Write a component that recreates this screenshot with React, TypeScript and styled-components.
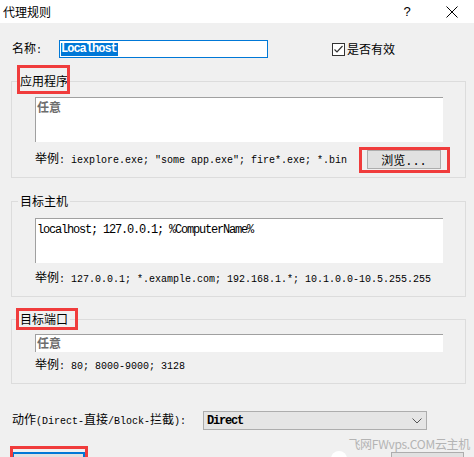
import styled, { createGlobalStyle, css } from "styled-components";

const cjk = `"Noto Sans CJK SC", "Liberation Sans", sans-serif`;
const mono = `"Liberation Mono", "Noto Sans CJK SC", monospace`;

const GlobalStyle = createGlobalStyle`
  html, body {
    margin: 0;
    padding: 0;
    background: #f0f0f0;
  }
  body {
    font-family: ${cjk};
    font-size: 12px;
    line-height: 14px;
    color: #000;
  }
`;

type Mark = { t: number; r: number; b: number; l: number };

const marked = css<{ $mark?: Mark }>`
  position: relative;
  ${({ $mark }) =>
    $mark &&
    css`
      &::after {
        content: "";
        position: absolute;
        top: ${-$mark.t}px;
        right: ${-$mark.r}px;
        bottom: ${-$mark.b}px;
        left: ${-$mark.l}px;
        border: 3px solid #f03c3c;
        pointer-events: none;
      }
    `}
`;

const Window = styled.div`
  position: relative;
  width: 474px;
  height: 457px;
  overflow: hidden;
  background: #f0f0f0;
`;

const TitleBar = styled.div`
  display: flex;
  align-items: center;
  height: 23px;
  padding-left: 3px;
  background: #fff;
`;

const Title = styled.span`
  flex: 1;
`;

const TitleButton = styled.span<{ $w: number }>`
  display: flex;
  align-items: center;
  justify-content: center;
  width: ${p => p.$w}px;
  height: 23px;
  font-family: "Liberation Sans", sans-serif;
  font-size: 13px;
`;

const Body = styled.div`
  padding: 17px 8px 0 11px;
`;

const Row = styled.div<{ $mt?: number }>`
  display: flex;
  align-items: center;
  margin-top: ${p => p.$mt ?? 0}px;
`;

const Label = styled.span<{ $w: number }>`
  width: ${p => p.$w}px;
  padding-left: 1px;
  box-sizing: border-box;
  white-space: nowrap;
`;

const Mono = styled.span`
  font-family: ${mono};
  font-size: 10px;
`;

const NameBox = styled.div`
  display: flex;
  align-items: center;
  width: 209px;
  height: 18px;
  box-sizing: border-box;
  padding-left: 1px;
  border: 1px solid #0078d7;
  background: #fff;
`;

const Selected = styled.span`
  height: 13px;
  line-height: 13px;
  padding-right: 1px;
  background: #0078d7;
  color: #fff;
  font-family: ${mono};
  font-size: 12px;
  font-weight: bold;
  letter-spacing: -1px;
`;

const Check = styled.label`
  display: flex;
  align-items: center;
  gap: 2px;
  margin-left: 64px;
`;

const CheckBox = styled.span`
  display: flex;
  align-items: center;
  justify-content: center;
  width: 13px;
  height: 13px;
  box-sizing: border-box;
  border: 1px solid #333;
  background: #fff;
`;

const Group = styled.fieldset<{ $mt: number }>`
  margin: ${p => p.$mt}px 0 0;
  padding: 0;
  min-width: 0;
  border: 1px solid #dcdcdc;
`;

const Legend = styled.legend<{ $mark?: Mark }>`
  margin-left: 6px;
  padding: 0 2px;
  line-height: 14px;
  ${marked}
`;

const GroupBody = styled.div<{ $pt: number }>`
  padding: ${p => p.$pt}px 22px 8px 23px;
`;

const Field = styled.div<{ $h: number; $pt: number }>`
  height: ${p => p.$h}px;
  box-sizing: border-box;
  padding: ${p => p.$pt}px 1px 0;
  border-top: 1px solid #a0a0a0;
  border-left: 1px solid #a0a0a0;
  background: #fff;
`;

const Placeholder = styled.span`
  color: #6d6d6d;
  font-weight: bold;
`;

const FieldMono = styled.span`
  font-family: ${mono};
  font-size: 12px;
  letter-spacing: -1.2px;
`;

const ExampleRow = styled.div<{ $mt: number }>`
  display: flex;
  align-items: center;
  justify-content: space-between;
  height: 19px;
  margin-top: ${p => p.$mt}px;
  padding-right: 2px;
  white-space: pre;
`;

const Button = styled.button<{ $mark?: Mark; $w: number; $h: number; $primary?: boolean }>`
  width: ${p => p.$w}px;
  height: ${p => p.$h}px;
  box-sizing: border-box;
  padding: 0;
  border: ${p => (p.$primary ? "2px solid #0078d7" : "1px solid #adadad")};
  background: #e1e1e1;
  font-family: ${mono};
  font-size: 12px;
  color: #000;
  ${marked}
`;

const Select = styled.div`
  display: flex;
  align-items: center;
  justify-content: space-between;
  width: 224px;
  height: 19px;
  box-sizing: border-box;
  padding: 0 4px 0 3px;
  border: 1px solid #adadad;
  background: #e5e5e5;
`;

const SelectValue = styled.span`
  font-family: ${mono};
  font-size: 12px;
  font-weight: bold;
  letter-spacing: -1.2px;
`;

const Footer = styled.div`
  display: flex;
  justify-content: space-between;
  margin-top: 22px;
  padding: 0 2px 0 1px;
`;

const Watermark = styled.div`
  position: absolute;
  right: 4px;
  top: 437px;
  color: #b4b4b4;
  font-size: 12px;
  letter-spacing: -0.3px;
`;

const WatermarkDot = styled.span`
  position: absolute;
  left: 331px;
  top: 451px;
  width: 16px;
  height: 16px;
  border-radius: 50%;
  background: #fff;
`;

const Example = ({ text }: { text: string }) => (
  <span>
    举例<Mono>{text}</Mono>
  </span>
);

const App = () => (
  <Window>
    <GlobalStyle />
    <TitleBar>
      <Title>代理规则</Title>
      <TitleButton $w={46}>?</TitleButton>
      <TitleButton $w={44}>
        <svg width="12" height="12" viewBox="0 0 12 12">
          <path d="M0.5 0.5 L11.5 11.5 M11.5 0.5 L0.5 11.5" stroke="#000" strokeWidth="1" fill="none" />
        </svg>
      </TitleButton>
    </TitleBar>

    <Body>
      <Row>
        <Label $w={48}>
          名称<Mono>:</Mono>
        </Label>
        <NameBox>
          <Selected>Localhost</Selected>
        </NameBox>
        <Check>
          <CheckBox>
            <svg width="11" height="11" viewBox="0 0 11 11">
              <polyline points="1.5,5.5 4,8 9.5,2" stroke="#333" strokeWidth="1.2" fill="none" />
            </svg>
          </CheckBox>
          是否有效
        </Check>
      </Row>

      <Group $mt={16}>
        <Legend $mark={{ t: 9, r: 0, b: 6, l: 1 }}>应用程序</Legend>
        <GroupBody $pt={9}>
          <Field $h={45} $pt={2}>
            <Placeholder>任意</Placeholder>
          </Field>
          <ExampleRow $mt={8}>
            <Example text={`: iexplore.exe; "some app.exe"; fire*.exe; *.bin`} />
            <Button $w={74} $h={19} $mark={{ t: 4, r: 10, b: 5, l: 9 }}>
              浏览...
            </Button>
          </ExampleRow>
        </GroupBody>
      </Group>

      <Group $mt={16}>
        <Legend>目标主机</Legend>
        <GroupBody $pt={10}>
          <Field $h={45} $pt={2}>
            <FieldMono>localhost; 127.0.0.1; %ComputerName%</FieldMono>
          </Field>
          <ExampleRow $mt={6}>
            <Example text=": 127.0.0.1; *.example.com; 192.168.1.*; 10.1.0.0-10.5.255.255" />
          </ExampleRow>
        </GroupBody>
      </Group>

      <Group $mt={15}>
        <Legend $mark={{ t: 4, r: 8, b: 4, l: 2 }}>目标端口</Legend>
        <GroupBody $pt={8}>
          <Field $h={18} $pt={1}>
            <Placeholder>任意</Placeholder>
          </Field>
          <ExampleRow $mt={4}>
            <Example text=": 80; 8000-9000; 3128" />
          </ExampleRow>
        </GroupBody>
      </Group>

      <Row $mt={27}>
        <Label $w={192}>
          动作<Mono>(Direct-</Mono>直接<Mono>/Block-</Mono>拦截<Mono>):</Mono>
        </Label>
        <Select>
          <SelectValue>Direct</SelectValue>
          <svg width="10" height="6" viewBox="0 0 10 6">
            <polyline points="0.5,0.5 5,5 9.5,0.5" stroke="#555" strokeWidth="1" fill="none" />
          </svg>
        </Select>
      </Row>

      <Footer>
        <Button $w={73} $h={23} $primary $mark={{ t: 8, r: 5, b: 10, l: 4 }}>
          确定
        </Button>
        <Button $w={73} $h={23}>
          取消
        </Button>
      </Footer>
    </Body>

    <WatermarkDot />
    <Watermark>飞网FWvps.COM云主机</Watermark>
  </Window>
);

export default App;
